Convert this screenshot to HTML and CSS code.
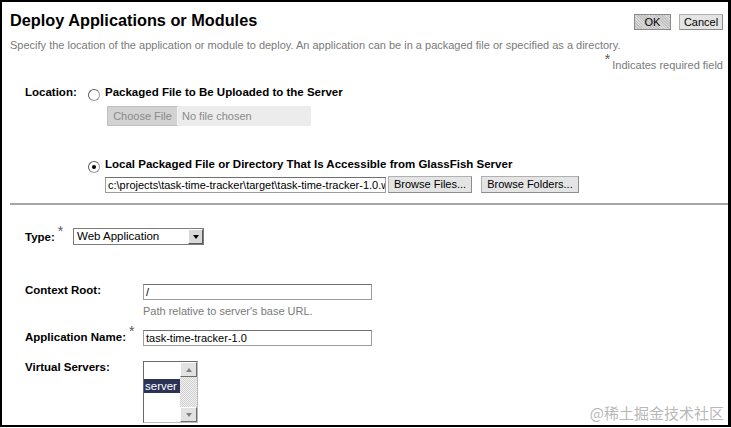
FILE: index.html
```html
<!DOCTYPE html>
<html>
<head>
<meta charset="utf-8">
<link rel="stylesheet" href="styles.css">
</head>
<body>
<div class="frame">
  <div class="header">
    <h1 class="title">Deploy Applications or Modules</h1>
    <div class="actions">
      <button class="btn btn-ok">OK</button>
      <button class="btn btn-cancel">Cancel</button>
    </div>
  </div>
  <p class="desc">Specify the location of the application or module to deploy. An application can be in a packaged file or specified as a directory.</p>
  <p class="req"><span class="star">*</span>Indicates required field</p>

  <div class="location">
    <div class="label loc-label">Location:</div>
    <div class="options">
      <div class="option"><span class="radio"></span><span class="opt-text">Packaged File to Be Uploaded to the Server</span></div>
      <div class="file-box"><span class="file-btn">Choose File</span><span class="file-name">No file chosen</span></div>
      <div class="option option-local"><span class="radio checked"></span><span class="opt-text">Local Packaged File or Directory That Is Accessible from GlassFish Server</span></div>
      <div class="path-row">
        <div class="text-input path">c:\projects\task-time-tracker\target\task-time-tracker-1.0.war</div>
        <button class="btn btn-browse">Browse Files...</button>
        <button class="btn btn-browse btn-folders">Browse Folders...</button>
      </div>
    </div>
  </div>

  <div class="divider"></div>

  <div class="type-row">
    <div class="label">Type:<span class="star">*</span></div>
    <div class="select"><span class="select-value">Web Application</span><span class="select-arrow"><span class="tri"></span></span></div>
  </div>

  <div class="field ctx">
    <div class="label">Context Root:</div>
    <div class="field-body">
      <div class="text-input wide">/</div>
      <div class="hint">Path relative to server's base URL.</div>
    </div>
  </div>

  <div class="field app">
    <div class="label">Application Name:<span class="star">*</span></div>
    <div class="field-body">
      <div class="text-input wide">task-time-tracker-1.0</div>
    </div>
  </div>

  <div class="field vs">
    <div class="label">Virtual Servers:</div>
    <div class="field-body">
      <div class="listbox">
        <div class="list-items">
          <div class="list-item selected">server</div>
        </div>
        <div class="scrollbar">
          <span class="sb-btn"><span class="tri up"></span></span>
          <span class="sb-track"></span>
          <span class="sb-btn"><span class="tri"></span></span>
        </div>
      </div>
    </div>
  </div>

  <div class="watermark">@稀土掘金技术社区</div>
</div>
</body>
</html>
```

FILE: styles.css
```css
* { box-sizing: border-box; }
html, body { margin: 0; padding: 0; background: #fff; }
body {
  font-family: "Liberation Sans", Arial, sans-serif;
  font-size: 11px;
  color: #000;
}
.frame {
  position: relative;
  width: 731px;
  height: 427px;
  border: 2px solid #000;
  border-right-width: 3px;
  overflow: hidden;
}
.header {
  display: flex;
  justify-content: space-between;
  align-items: flex-start;
  padding: 10px 5px 0 8px;
}
.title {
  margin: 0;
  font-size: 16.3px;
  line-height: 17px;
  font-weight: bold;
}
.actions { display: flex; gap: 8px; margin-top: 2px; }
.btn {
  font-family: "Liberation Sans", Arial, sans-serif;
  font-size: 11px;
  height: 16px;
  line-height: 13px;
  padding: 0 5px;
  background: #e4e4e4;
  border: 1px solid #8c8c8c;
  border-top-color: #b0b0b0;
  border-left-color: #b0b0b0;
  color: #000;
  margin: 0;
  border-radius: 0;
}
.btn-ok {
  width: 37px;
  background: repeating-linear-gradient(45deg, #c2c2c2 0 1px, #dadada 1px 2px);
  border-color: #8a8a8a;
}
.btn-cancel { width: 44px; padding: 0; }
.desc {
  margin: 9px 0 0 8px;
  color: #7a7a7a;
  line-height: 13px;
}
.req {
  margin: 7px 5px 0 0;
  text-align: right;
  color: #7a7a7a;
  line-height: 13px;
}
.star {
  color: #5a5a5a;
  font-size: 14px;
  font-weight: normal;
  position: relative;
  top: -5px;
  margin-right: 2px;
  line-height: 0;
}
.label { font-weight: bold; font-size: 11.5px; line-height: 13px; }
.label .star { margin-left: 3px; }

.location {
  display: flex;
  margin: 14px 0 0 23px;
}
.loc-label { width: 63px; padding-top: 0; }
.options { display: flex; flex-direction: column; }
.option { display: flex; align-items: center; gap: 5px; font-weight: bold; font-size: 11.5px; line-height: 13px; }
.radio {
  width: 12px; height: 12px;
  border-radius: 50%;
  border: 1px solid #9a9a9a;
  border-top-color: #606060;
  border-left-color: #606060;
  background: #fff;
  position: relative;
  top: 2px;
}
.radio.checked::after {
  content: "";
  position: absolute;
  left: 3px; top: 3px;
  width: 4px; height: 4px;
  border-radius: 50%;
  background: #000;
}
.file-box {
  display: flex;
  width: 204px;
  height: 20px;
  margin: 7px 0 0 19px;
  background: #ececec;
}
.file-btn {
  width: 71px;
  height: 20px;
  line-height: 18px;
  text-align: center;
  background: #d2d2d2;
  color: #8a8a8a;
  border: 1px solid #c0c0c0;
  border-right-color: #f4f4f4;
}
.file-name { color: #8a8a8a; padding-left: 4px; line-height: 20px; }
.option-local { margin-top: 32px; }
.path-row { display: flex; align-items: center; margin: 5px 0 0 17px; }
.text-input {
  height: 16px;
  line-height: 14px;
  padding: 0 2px;
  border: 1px solid #9c9c9c;
  border-top-color: #6f6f6f;
  background: #fff;
  white-space: nowrap;
  overflow: hidden;
}
.path { width: 281px; }
.btn-browse { height: 17px; padding: 0 5px; margin-left: 2px; }
.btn-folders { margin-left: 9px; }

.divider {
  height: 0;
  border-top: 2px solid #a6a6a6;
  margin: 10px 0 0 8px;
}

.type-row { display: flex; margin: 23px 0 0 23px; }
.type-row .label { width: 48px; padding-top: 3px; }
.select {
  display: flex;
  width: 131px;
  height: 17px;
  border: 1px solid #7c7c7c;
  background: #fff;
}
.select-value { flex: 1; padding-left: 3px; line-height: 15px; font-size: 11.5px; }
.select-arrow {
  width: 15px;
  background: #d8d8d8;
  border: 1px solid #fff;
  border-right-color: #5a5a5a;
  border-bottom-color: #5a5a5a;
  display: flex; align-items: center; justify-content: center;
}
.tri {
  width: 0; height: 0;
  border-left: 3px solid transparent;
  border-right: 3px solid transparent;
  border-top: 4px solid #000;
}
.tri.up { border-top: 0; border-bottom: 4px solid #808080; }
.scrollbar .tri { border-top-color: #808080; }

.field { display: flex; margin-left: 23px; }
.field .label { width: 118px; }
.ctx { margin-top: 39px; }
.ctx .label { padding-top: 0; }
.wide { width: 229px; }
.hint { color: #7a7a7a; margin-top: 5px; line-height: 13px; }
.app { margin-top: 12px; }
.app .label { padding-top: 1px; }
.vs { margin-top: 14px; }
.vs .label { padding-top: 1px; }
.vs .listbox { margin-top: 1px; }
.listbox {
  display: flex;
  width: 55px;
  height: 62px;
  border: 1px solid #6a6a6a;
  border-right-color: #bbb;
  border-bottom-color: #bbb;
  background: #fff;
}
.list-items { flex: 1; padding-top: 17px; }
.list-item { line-height: 14px; padding-left: 1px; font-size: 11.5px; }
.list-item.selected { background: #2b3457; color: #fff; }
.scrollbar { width: 17px; display: flex; flex-direction: column; }
.sb-btn {
  height: 15px;
  background: #e2e2e2;
  border: 1px solid #fff;
  border-right-color: #6c6c6c;
  border-bottom-color: #6c6c6c;
  display: flex; align-items: center; justify-content: center;
}
.sb-track {
  flex: 1;
  background: repeating-conic-gradient(#cfcfcf 0 25%, #f2f2f2 0 50%) 0 0 / 2px 2px;
}

.watermark {
  position: absolute;
  right: 4px;
  bottom: 3px;
  font-family: "Noto Sans CJK SC", sans-serif;
  font-size: 15px;
  color: #b8b8b8;
  line-height: 18px;
}
```
